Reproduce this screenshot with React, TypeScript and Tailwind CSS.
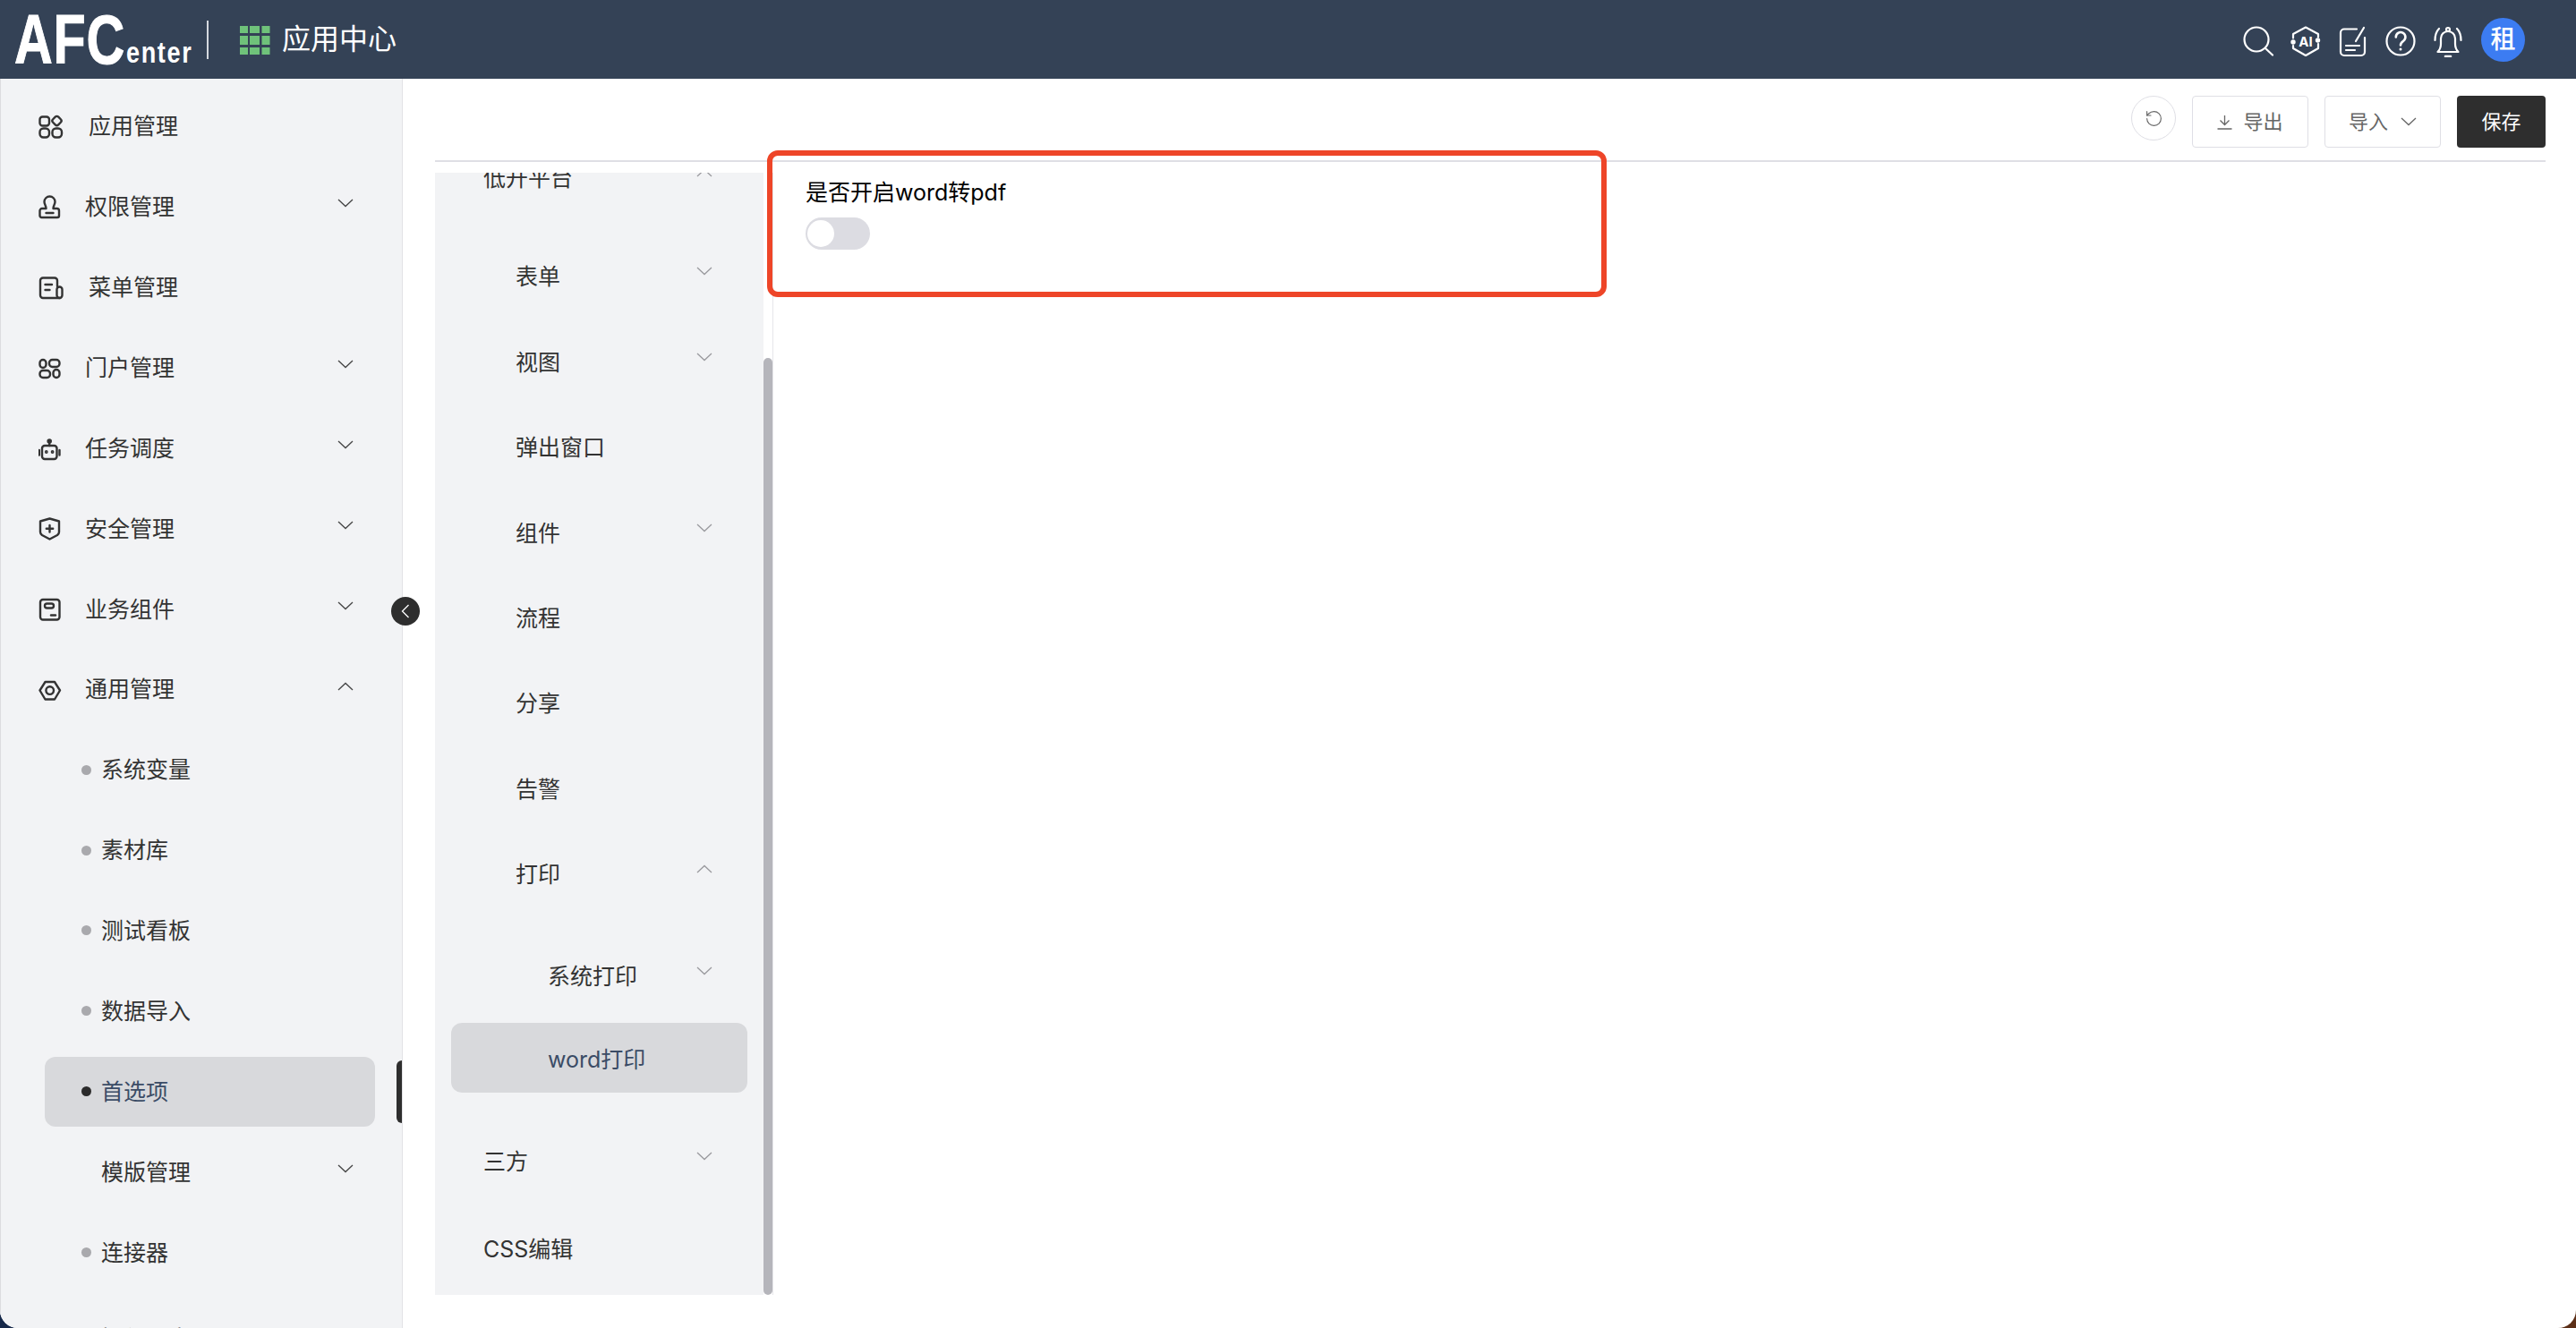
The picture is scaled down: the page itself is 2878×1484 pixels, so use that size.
import type { ReactNode } from "react";
import { RotateCcw } from "lucide-react";

function Chevron({ up, className = "text-[#444]" }: { up?: boolean; className?: string }) {
  return (
    <svg width="18" height="10" viewBox="0 0 18 10" fill="none" className={`shrink-0 ${className}`}>
      <path d={up ? "M1 9 L9 1.5 L17 9" : "M1 1 L9 8.5 L17 1"} stroke="currentColor" strokeWidth="1.3" />
    </svg>
  );
}

function NavIcon({ children }: { children: ReactNode }) {
  return (
    <svg
      width="28"
      height="28"
      viewBox="0 0 28 28"
      fill="none"
      stroke="#333"
      strokeWidth="2.4"
      strokeLinecap="round"
      strokeLinejoin="round"
      className="shrink-0"
    >
      {children}
    </svg>
  );
}

const navIcons: Record<string, ReactNode> = {
  apps: (
    <>
      <rect x="1.5" y="3.5" width="10.5" height="10" rx="3" />
      <rect x="16.2" y="3.7" width="8.6" height="8.6" rx="2.5" transform="rotate(45 20.5 8)" />
      <rect x="1.5" y="16.5" width="10.5" height="10" rx="4" />
      <rect x="15.5" y="16.5" width="10.5" height="10" rx="4" />
    </>
  ),
  stamp: (
    <>
      <path d="M8.5 16 C8.5 12.5 6.5 11.5 6.5 8.5 a6 6 0 0 1 12 0 C18.5 11.5 16.5 12.5 16.5 16 H20.5 a2.5 2.5 0 0 1 2.5 2.5 V24 a2 2 0 0 1 -2 2 H3.5 a2 2 0 0 1 -2 -2 V18.5 A2.5 2.5 0 0 1 4 16 Z" />
      <path d="M8.5 21 H16.5" />
    </>
  ),
  doc: (
    <>
      <path d="M21 13 V6.5 a3 3 0 0 0 -3 -3 H5 a3 3 0 0 0 -3 3 V23 a3 3 0 0 0 3 3 H24" />
      <rect x="20.5" y="13.5" width="6" height="12.5" rx="3" />
      <path d="M7.5 11 H15 M7.5 17 H12.5" />
    </>
  ),
  portal: (
    <>
      <rect x="1.5" y="5" width="7" height="9" rx="3.5" />
      <rect x="12" y="5" width="11.5" height="8" rx="3.5" />
      <rect x="1.5" y="17" width="11.5" height="8" rx="3.5" />
      <rect x="16.5" y="16" width="7" height="9" rx="3.5" />
    </>
  ),
  robot: (
    <>
      <rect x="4" y="11" width="16.5" height="15" rx="3" />
      <path d="M12.2 6 V11 M0.8 16 V21.5 M23.5 16 V21.5" />
      <circle cx="12.2" cy="6" r="1.6" fill="#333" />
      <circle cx="8.8" cy="18" r="0.7" fill="#333" />
      <circle cx="15.6" cy="18" r="0.7" fill="#333" />
    </>
  ),
  shield: (
    <>
      <path d="M12.5 3.5 L23 6.5 V18.5 C23 20 22.3 21 21 22 L12.5 26.5 L4 22 C2.7 21 2 20 2 18.5 V6.5 Z" />
      <path d="M12.5 11 V18.5 M8.8 14.8 H16.2" />
    </>
  ),
  card: (
    <>
      <rect x="2" y="4" width="21.5" height="22.5" rx="3" />
      <rect x="7" y="8.5" width="10" height="5" rx="2.5" />
      <path d="M14 21.5 H19" />
    </>
  ),
  nut: (
    <>
      <path d="M7.5 6 H18 L24 15.5 L18 25.5 H7.5 L1.5 15.5 Z" />
      <circle cx="12.7" cy="15.6" r="4.3" />
    </>
  ),
};

type NavRow = { label: string; icon?: string; wide?: boolean; chevron?: "up" | "down"; dot?: boolean; active?: boolean; last?: boolean };

const navRows: NavRow[] = [
  { label: "应用管理", icon: "apps", wide: true },
  { label: "权限管理", icon: "stamp", chevron: "down" },
  { label: "菜单管理", icon: "doc", wide: true },
  { label: "门户管理", icon: "portal", chevron: "down" },
  { label: "任务调度", icon: "robot", chevron: "down" },
  { label: "安全管理", icon: "shield", chevron: "down" },
  { label: "业务组件", icon: "card", chevron: "down" },
  { label: "通用管理", icon: "nut", chevron: "up" },
  { label: "系统变量", dot: true },
  { label: "素材库", dot: true },
  { label: "测试看板", dot: true },
  { label: "数据导入", dot: true },
  { label: "首选项", dot: true, active: true },
  { label: "模版管理", chevron: "down" },
  { label: "连接器", dot: true },
  { label: "操作日志", dot: true, last: true },
];

function NavItem({ row }: { row: NavRow }) {
  if (row.icon) {
    return (
      <div className="ml-[42px] mr-[54px] flex h-[78px] shrink-0 items-center text-[#333]">
        <NavIcon>{navIcons[row.icon]}</NavIcon>
        <span className={`pt-[2px] ${row.wide ? "ml-[28px]" : "ml-[24px]"}`}>{row.label}</span>
        {row.chevron && (
          <span className="ml-auto mb-[7px]">
            <Chevron up={row.chevron === "up"} />
          </span>
        )}
      </div>
    );
  }
  return (
    <div
      className={`relative ml-[49px] mr-[30px] flex h-[78px] shrink-0 items-center rounded-xl pl-[41px] pr-[24px] ${
        row.active ? "bg-[#d8d9dc] text-[#3b4c66]" : "text-[#333]"
      } ${row.last ? "mt-[6px]" : ""}`}
    >
      {row.dot ? (
        <span className={`mr-[11px] size-[11px] rounded-full ${row.active ? "bg-[#2b2b2b]" : "bg-[#a9a9ad]"}`} />
      ) : (
        <span className="mr-[11px] w-[11px]" />
      )}
      <span className="pt-[2px]">{row.label}</span>
      {row.chevron && (
        <span className="ml-auto mb-[7px]">
          <Chevron />
        </span>
      )}
      {row.active && (
        <span className="absolute left-[393px] top-[4px] h-[70px] w-[6px] rounded-l-md bg-[#2e2e2e]" />
      )}
    </div>
  );
}

type PanelRow = { label: string; level: 1 | 2 | 3; chevron?: "up" | "down"; active?: boolean; mt: string };

const panelRows: PanelRow[] = [
  { label: "低开平台", level: 1, chevron: "up", mt: "-mt-[34px]" },
  { label: "表单", level: 2, chevron: "down", mt: "mt-[32px]" },
  { label: "视图", level: 2, chevron: "down", mt: "mt-[18px]" },
  { label: "弹出窗口", level: 2, mt: "mt-[17px]" },
  { label: "组件", level: 2, chevron: "down", mt: "mt-[18px]" },
  { label: "流程", level: 2, mt: "mt-[17px]" },
  { label: "分享", level: 2, mt: "mt-[17px]" },
  { label: "告警", level: 2, mt: "mt-[18px]" },
  { label: "打印", level: 2, chevron: "up", mt: "mt-[17px]" },
  { label: "系统打印", level: 3, chevron: "down", mt: "mt-[36px]" },
  { label: "word打印", level: 3, active: true, mt: "mt-[14px]" },
  { label: "三方", level: 1, chevron: "down", mt: "mt-[37px]" },
  { label: "CSS编辑", level: 1, mt: "mt-[20px]" },
];

const panelIndent = { 1: "pl-[36px]", 2: "pl-[72px]", 3: "pl-[108px]" };

function PanelItem({ row }: { row: PanelRow }) {
  return (
    <div
      className={`mx-[18px] flex h-[78px] shrink-0 items-center rounded-xl pr-[39px] ${row.mt} ${panelIndent[row.level]} ${
        row.active ? "bg-[#d8d9dc] text-[#3b4c66]" : "text-[#333]"
      }`}
    >
      <span className={row.active ? "pt-[6px]" : "pt-[4px]"}>{row.label}</span>
      {row.chevron && (
        <span className="ml-auto mb-[10px]">
          <Chevron up={row.chevron === "up"} className="text-[#9a9a9e]" />
        </span>
      )}
    </div>
  );
}

function HeaderIcon({ children }: { children: ReactNode }) {
  return (
    <span className="flex w-[53px] justify-center">
      <svg
        width="40"
        height="40"
        viewBox="0 0 40 40"
        fill="none"
        stroke="#fff"
        strokeWidth="2.2"
        strokeLinecap="round"
        strokeLinejoin="round"
      >
        {children}
      </svg>
    </span>
  );
}

function Header() {
  return (
    <header className="flex h-[88px] shrink-0 items-center bg-[#344256] pl-[16px] pr-[57px] text-white">
      <div className="flex h-[56px] w-[198px] shrink-0 items-end font-['Liberation_Sans',sans-serif] font-bold leading-none">
        <span className="block h-[56px] w-[125px] origin-left scale-x-[0.76] whitespace-nowrap text-[78px] leading-[56px] tracking-[1px] [-webkit-text-stroke:1px_white]">
          AFC
        </span>
        <span className="mb-[1px] block w-[73px] origin-left scale-x-[0.82] text-[33px] leading-[24px] tracking-[2px]">
          enter
        </span>
      </div>
      <span className="ml-[17px] h-[43px] w-[2px] bg-[#d5d9df]" />
      <svg width="34" height="33" viewBox="0 0 34 33" className="ml-[35px] shrink-0" fill="#6fc27a">
        <rect x="0" y="1" width="9" height="8" />
        <rect x="11" y="1" width="11" height="8" />
        <rect x="24.5" y="1" width="9" height="8" />
        <rect x="0" y="12" width="9" height="10" />
        <rect x="11" y="12" width="11" height="10" />
        <rect x="24.5" y="12" width="9" height="10" />
        <rect x="0" y="25" width="9" height="8" />
        <rect x="11" y="25" width="11" height="8" />
        <rect x="24.5" y="25" width="9" height="8" />
      </svg>
      <span className="ml-[13px] text-[32px]">应用中心</span>
      <div className="ml-auto flex items-center">
        <HeaderIcon>
          <circle cx="18" cy="20" r="13.5" />
          <path d="M28 30 L36 37.5" />
        </HeaderIcon>
        <HeaderIcon>
          <path d="M6 18.5 V14 L20 6.5 L34 14 V17.5 M34 25 V30 L20 38 L6 30 V27" />
          <circle cx="6" cy="23" r="1.6" fill="#fff" />
          <circle cx="33.5" cy="21" r="1.6" fill="#fff" />
          <text x="20" y="27.5" textAnchor="middle" fill="#fff" stroke="none" fontSize="15" fontWeight="700">
            AI
          </text>
        </HeaderIcon>
        <HeaderIcon>
          <path d="M24 8.5 H10 a4 4 0 0 0 -4 4 V34 a4 4 0 0 0 4 4 H29 a4 4 0 0 0 4 -4 V18" />
          <path d="M32 7 L23 22" />
          <path d="M12 27 H27 M12 32 H22" />
        </HeaderIcon>
        <HeaderIcon>
          <circle cx="20" cy="22" r="15.5" />
          <path d="M14.8 17.5 a5.3 5.3 0 1 1 8.4 4.2 c-2.1 1.5 -3.2 2.4 -3.2 4.8" strokeWidth="2.6" />
          <circle cx="20" cy="31" r="1.5" fill="#fff" stroke="none" />
        </HeaderIcon>
        <HeaderIcon>
          <circle cx="20" cy="9" r="2" />
          <path d="M8.5 34 C10.5 32 12 29.5 12 25 V19 a8 8 0 0 1 16 0 V25 C28 29.5 29.5 32 31.5 34 Z" />
          <path d="M17 39 H23" strokeWidth="2.6" />
          <path d="M5.5 21 C5.5 15 7 11 10 8 M34.5 21 C34.5 15 33 11 30 8" />
        </HeaderIcon>
        <span className="ml-[11px] flex size-[49px] items-center justify-center rounded-full bg-[#3c7cf2] text-[28px] font-medium">
          租
        </span>
      </div>
    </header>
  );
}

function Sidebar() {
  return (
    <aside className="relative z-10 w-[450px] shrink-0 border-l border-r border-l-[#dcdcdf] border-r-[#e2e2e6] bg-[#f2f3f5]">
      <div className="flex h-full flex-col gap-[11.9px] overflow-hidden pt-[14px]">
        {navRows.map((row) => (
          <NavItem key={row.label} row={row} />
        ))}
      </div>
      <button className="absolute left-[436px] top-[579px] flex size-[32px] items-center justify-center rounded-full bg-[#2e2e2e]">
        <svg width="12" height="18" viewBox="0 0 12 18" fill="none" stroke="#fff" strokeWidth="1.3">
          <path d="M9.5 2 L2.5 9 L9.5 16" />
        </svg>
      </button>
    </aside>
  );
}

function Toolbar() {
  return (
    <div className="flex h-[93px] shrink-0 items-start justify-end gap-[18px] border-b-2 border-[#dfdfe5] pt-[19px] text-[22px] text-[#666]">
      <button className="flex size-[50px] items-center justify-center rounded-full border border-[#dfdfe5]">
        <RotateCcw size={21} strokeWidth={1.3} />
      </button>
      <button className="flex h-[58px] w-[130px] items-center justify-center gap-[12px] rounded border border-[#dfdfe5]">
        <svg width="17" height="17" viewBox="0 0 17 17" fill="none" stroke="currentColor" strokeWidth="1.3">
          <path d="M8.5 1 V11 M3.5 6.5 L8.5 11.5 L13.5 6.5 M0.5 16 H16.5" />
        </svg>
        导出
      </button>
      <button className="flex h-[58px] w-[130px] items-center justify-center gap-[14px] rounded border border-[#dfdfe5]">
        导入
        <Chevron className="text-[#666]" />
      </button>
      <button className="h-[58px] w-[99px] rounded bg-[#2e2e2e] text-white">保存</button>
    </div>
  );
}

export default function App() {
  return (
    <div className="h-[1484px] w-[2878px] overflow-hidden bg-[linear-gradient(to_right,#16294a_50%,#5c2f17_50%)]">
      <div className="relative flex h-full flex-col overflow-hidden rounded-b-[20px] bg-white font-['Inter','Noto_Sans_CJK_SC',sans-serif] text-[25px]">
        <Header />
        <div className="flex min-h-0 flex-1">
          <Sidebar />
          <main className="flex min-w-0 flex-1 flex-col pl-[36px] pr-[34px]">
            <Toolbar />
            <div className="flex min-h-0 flex-1 pb-[37px] pt-[12px]">
              <div className="flex w-[378px] shrink-0 border-r border-[#e6e6ea]">
                <nav className="flex w-[367px] flex-col overflow-hidden bg-[#f2f3f5]">
                  {panelRows.map((row) => (
                    <PanelItem key={row.label} row={row} />
                  ))}
                </nav>
                <div className="w-[10px] pt-[207px]">
                  <div className="h-full rounded-full bg-[#b5b5bb]" />
                </div>
              </div>
              <section className="flex-1 pl-[36px] pt-[5px] text-black">
                <div className="leading-[34px]">是否开启word转pdf</div>
                <div className="mt-[11px] flex h-[36px] w-[72px] items-center rounded-full bg-[#dcdce2] pl-[2px] pr-[40px]">
                  <span className="size-[30px] rounded-full bg-white" />
                </div>
              </section>
            </div>
          </main>
        </div>
        <div className="pointer-events-none absolute left-[857px] top-[168px] h-[164px] w-[938px] rounded-[12px] border-[6px] border-[#ee4528]" />
      </div>
    </div>
  );
}
